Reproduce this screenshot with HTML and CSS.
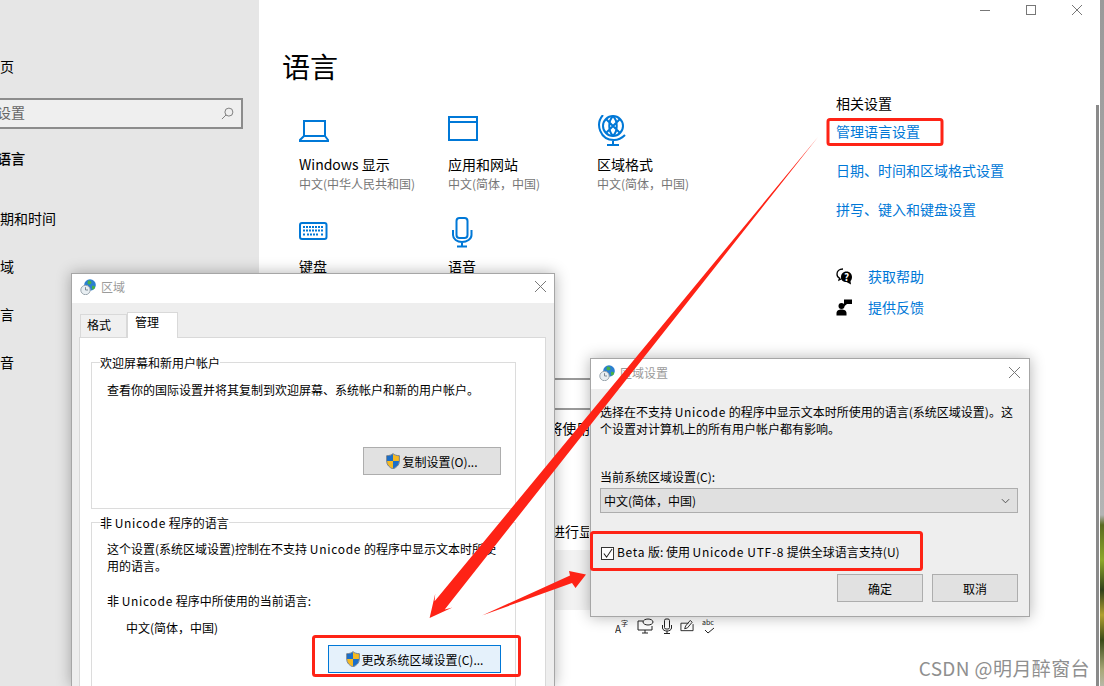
FILE: index.html
```html
<!DOCTYPE html>
<html lang="zh-CN">
<head>
  <meta charset="UTF-8" />
  <title>语言</title>
  <link rel="stylesheet" href="styles.css">
</head>
<body>
  <svg class="icon-defs" xmlns="http://www.w3.org/2000/svg">
    <symbol id="shield" viewBox="0 0 14 16">
      <path fill="#1c6fc9" d="M7 1 L7 8 L1 8 L1 3 C3.5 3 5.5 2.2 7 1z"/>
      <path fill="#f6b921" d="M7 1 C8.5 2.2 10.5 3 13 3 L13 8 L7 8z"/>
      <path fill="#f6b921" d="M1 8 L7 8 L7 15.5 C3.5 14 1.2 12 1 8z"/>
      <path fill="#1c6fc9" d="M7 8 L13 8 C12.8 12 10.5 14 7 15.5z"/>
      <path fill="none" stroke="#4a5a6a" stroke-width="0.7" d="M7 .6 C5.5 2 3.2 2.7 .6 2.7 L.6 8 C.8 12.3 3.4 14.4 7 16 C10.6 14.4 13.2 12.3 13.4 8 L13.4 2.7 C10.8 2.7 8.500 2 7 .6z"/>
    </symbol>
    <symbol id="globe-clock" viewBox="0 0 16 16">
      <circle cx="10" cy="6" r="5.800" fill="#2b7fd0"/>
      <path fill="#46b04a" d="M8 1.500 C10 1 12 2.500 11.500 4 C10.500 6 8.500 5.500 7.500 4.500z M12 7 C14 6.500 15.500 7 15 9 C14 10.500 12.500 11 12 10z"/>
      <circle cx="5.500" cy="11" r="4.700" fill="#e8eef2" stroke="#9aa5ad" stroke-width="1"/>
      <path fill="none" stroke="#7d8a93" stroke-width="1" d="M5.500 8.200 V11 H8"/>
    </symbol>
  </svg>

  <div class="settings">
    <nav class="sidebar">
      <div class="side-item home">主页</div>
      <div class="search"><span class="search-text">查找设置</span>
        <svg class="search-icon" viewBox="0 0 14 14"><circle cx="8.500" cy="5.500" r="4.300"/><path d="M5.500 8.500 L1 13"/></svg>
      </div>
      <div class="side-item selected">语言</div>
      <div class="side-item first">日期和时间</div>
      <div class="side-item">区域</div>
      <div class="side-item">语言</div>
      <div class="side-item">语音</div>
    </nav>

    <main class="content">
      <div class="content-main">
        <h1>语言</h1>
        <div class="tiles">
          <div class="tile">
            <svg class="tile-icon" viewBox="0 0 40 40"><rect x="5" y="6" width="21" height="15"/><path d="M5 21 L1 25 V26 H29 V25 L26 21"/></svg>
            <div class="tile-title">Windows 显示</div>
            <div class="tile-sub">中文(中华人民共和国)</div>
          </div>
          <div class="tile">
            <svg class="tile-icon" viewBox="0 0 40 40"><rect x="1" y="2" width="28" height="23"/><path d="M1 7 H29"/></svg>
            <div class="tile-title">应用和网站</div>
            <div class="tile-sub">中文(简体，中国)</div>
          </div>
          <div class="tile">
            <svg class="tile-icon" viewBox="0 0 40 40"><circle cx="16" cy="11" r="10"/><path d="M9 4 L23 18 M23 4 L9 18 M16 1 C11 6 11 16 16 21 M16 1 C21 6 21 16 16 21"/><path d="M6 0 C-2 9 3 25 17 25 C21 25 24 24 28 20 M16 25 V30 M10 30 H22"/></svg>
            <div class="tile-title">区域格式</div>
            <div class="tile-sub">中文(简体，中国)</div>
          </div>
          <div class="tile">
            <svg class="tile-icon" viewBox="0 0 40 40"><rect x="1" y="6" width="26.500" height="16" rx="2"/><path class="keys" d="M4 10 H24 M4 13.500 H24 M8 17.500 H20 M4 17.500 H6 M22 17.500 H24"/></svg>
            <div class="tile-title">键盘</div>
          </div>
          <div class="tile">
            <svg class="tile-icon" viewBox="0 0 40 40"><rect x="8.500" y="1" width="11" height="20" rx="3"/><path d="M5 13 V18 C5 22 9 25 14 25 C19 25 23.500 22 23.500 18 V13 M14 25 V29 M9 29.500 H19"/></svg>
            <div class="tile-title">语音</div>
          </div>
        </div>

        <section class="lang-section">
          <h2>Windows 显示语言</h2>
          <div class="lang-box"></div>
          <p class="lang-note first-note">Windows 功能(如“设置”和文件管理器)将使用此语言显示。</p>
          <h2 class="second">首选语言</h2>
          <p class="lang-note">应用和网站将以列表中支持的第一种语言进行显示。</p>
          <div class="lang-row"></div>
          <div class="lang-icons">
            <svg viewBox="0 0 14 16" class="lang-icon"><text x="0" y="15" class="glyph">A</text><text x="6" y="8" class="glyph small">字</text></svg>
            <svg viewBox="0 0 17 16" class="lang-icon wide"><path d="M6 3 H1 V12 H15 V8 M8 12 V15 M5 15 H11"/><ellipse cx="11" cy="4" rx="5" ry="3"/></svg>
            <svg viewBox="0 0 10 16" class="lang-icon narrow"><rect x="2.500" y="1" width="5" height="10" rx="1.500"/><path d="M.5 7 V10 C.5 12 3 13 5 13 C7 13 9.500 12 9.500 10 V7 M5 13 V15 M2 15.500 H8"/></svg>
            <svg viewBox="0 0 15 16" class="lang-icon"><path d="M1 5 H9 M14 6 V13 H1 V5"/><path d="M5 11 L6 8 L11 2 L13 4 L8 10z"/></svg>
            <svg viewBox="0 0 14 16" class="lang-icon"><text x="0" y="7" class="glyph small">abc</text><path d="M3 12 L6 15 L12 10"/></svg>
          </div>
        </section>
      </div>

      <aside class="related">
        <div class="related-title">相关设置</div>
        <a class="link first">管理语言设置</a>
        <a class="link">日期、时间和区域格式设置</a>
        <a class="link">拼写、键入和键盘设置</a>
        <div class="help-row help-first">
          <svg class="help-icon" viewBox="0 0 17 17"><path class="hollow" d="M7 1 C3 1 1 3 1 6 C1 8 2 9.500 3.500 10 L3 12 L6 10.500"/><path class="solid" d="M10.500 3.500 C7 3.500 5 6 5 9 C5 12 7 14 10.500 14 L15 16.500 L14.500 13 C15.500 12 16 10.500 16 9 C16 6 14 3.500 10.500 3.500z"/><text x="8" y="12.500" class="help-q">?</text></svg>
          <a class="link plain">获取帮助</a>
        </div>
        <div class="help-row">
          <svg class="help-icon" viewBox="0 0 17 17"><path class="solid" d="M8 0.500 H16 V5 H11 L8 7.500z"/><circle class="solid" cx="5.500" cy="7" r="3"/><path class="solid" d="M0.500 16.500 V14 C0.500 11.500 3 10.500 5.500 10.500 C8 10.500 10.500 11.500 10.500 14 V16.500z"/></svg>
          <a class="link plain">提供反馈</a>
        </div>
      </aside>
    </main>

    <div class="caption-btns">
      <svg viewBox="0 0 10 10" class="cap-btn"><path d="M0 5.500 H10"/></svg>
      <svg viewBox="0 0 10 10" class="cap-btn"><rect x=".5" y=".5" width="9" height="9"/></svg>
      <svg viewBox="0 0 10 10" class="cap-btn"><path d="M0 0 L10 10 M10 0 L0 10"/></svg>
    </div>
    <div class="scroll-thumb"></div>
  </div>
  <div class="desktop-strip"></div>

  <!-- 区域 dialog -->
  <div class="dialog region">
    <div class="dialog-title">
      <svg class="title-icon"><use href="#globe-clock"/></svg>
      <span class="title-text">区域</span>
      <svg viewBox="0 0 10 10" class="dialog-close"><path d="M0 0 L10 10 M10 0 L0 10"/></svg>
    </div>
    <div class="dialog-body">
      <div class="tabs">
        <div class="tab">格式</div>
        <div class="tab active">管理</div>
      </div>
      <div class="tab-panel">
        <fieldset class="group group-welcome">
          <legend>欢迎屏幕和新用户帐户</legend>
          <p>查看你的国际设置并将其复制到欢迎屏幕、系统帐户和新的用户帐户。</p>
          <div class="group-actions">
            <button class="btn copy-btn"><svg class="shield"><use href="#shield"/></svg>复制设置(O)...</button>
          </div>
        </fieldset>
        <fieldset class="group group-unicode">
          <legend>非 <span class="latin">Unicode</span> 程序的语言</legend>
          <p>这个设置(系统区域设置)控制在不支持 <span class="latin">Unicode</span> 的程序中显示文本时所使用的语言。</p>
          <p class="current-label">非 <span class="latin">Unicode</span> 程序中所使用的当前语言:</p>
          <p class="current-value">中文(简体，中国)</p>
          <div class="group-actions">
            <button class="btn focus change-btn"><svg class="shield"><use href="#shield"/></svg>更改系统区域设置(C)...</button>
          </div>
        </fieldset>
      </div>
    </div>
  </div>

  <!-- 区域设置 dialog -->
  <div class="dialog locale">
    <div class="dialog-title">
      <svg class="title-icon"><use href="#globe-clock"/></svg>
      <span class="title-text">区域设置</span>
      <svg viewBox="0 0 10 10" class="dialog-close"><path d="M0 0 L10 10 M10 0 L0 10"/></svg>
    </div>
    <div class="dialog-body locale-body">
      <p class="locale-desc">选择在不支持 <span class="latin">Unicode</span> 的程序中显示文本时所使用的语言(系统区域设置)。这<br>个设置对计算机上的所有用户帐户都有影响。</p>
      <div class="locale-label">当前系统区域设置(C):</div>
      <div class="select">
        <span>中文(简体，中国)</span>
        <svg viewBox="0 0 10 6" class="select-arrow"><path d="M1 1 L5 5 L9 1"/></svg>
      </div>
      <label class="check-row">
        <span class="checkbox"><svg viewBox="0 0 12 12"><path d="M2 6 L5 10 L11 1"/></svg></span>
        <span><span class="latin">Beta</span> 版: 使用 <span class="latin">Unicode UTF-8</span> 提供全球语言支持(U)</span>
      </label>
      <div class="locale-actions">
        <button class="btn wide">确定</button>
        <button class="btn wide">取消</button>
      </div>
    </div>
  </div>

  <!-- screenshot markup -->
  <svg class="markup" viewBox="0 0 1104 686" xmlns="http://www.w3.org/2000/svg">
    <rect x="828" y="119.500" width="114" height="25" rx="2"/>
    <rect x="313.500" y="636.500" width="206" height="39" rx="2"/>
    <rect x="591.500" y="532.500" width="330" height="37" rx="2"/>
    <polygon points="818,137 444.700,609.400 452.400,607.500 429.600,618 435.200,593.700 434.600,601.200"/>
    <polygon points="482,615.500 572,583 575.500,588 586,574.500 569,571 570,575.500"/>
  </svg>

  <div class="watermark">CSDN @明月醉窗台</div>
</body>
</html>
```

FILE: styles.css
```css
* {
  box-sizing: border-box;
}
body {
  margin: 0;
  width: 1104px;
  height: 686px;
  position: relative;
  overflow: hidden;
  background: #fff;
  color: #000;
  font-family: "Noto Sans CJK SC", "Noto Sans", sans-serif;
  font-size: 14px;
}
.icon-defs {
  position: absolute;
  width: 0;
  height: 0;
}
p {
  margin: 0;
}
.latin {
  letter-spacing: 0.7px;
}

/* settings window */
.settings {
  display: flex;
  width: 1100px;
  height: 686px;
  position: relative;
  overflow: hidden;
}
.sidebar {
  flex: 0 0 259px;
  background: #e6e6e6;
  padding-top: 42px;
  overflow: hidden;
}
.side-item {
  height: 48px;
  line-height: 48px;
  margin-left: -14px;
  white-space: nowrap;
}
.side-item.selected {
  margin-left: -3px;
  margin-top: 5px;
  -webkit-text-stroke: 0.3px #000;
}
.side-item.first {
  margin-top: 12px;
}
.search {
  margin: 8px 16px 0 -10px;
  height: 31px;
  border: 2px solid #8c8c8c;
  background: #efefef;
  display: flex;
  align-items: center;
  justify-content: space-between;
  padding: 0 7px 0 0;
  color: #666;
  overflow: hidden;
}
.search-text {
  margin: -3px 0 0 -23px;
  white-space: nowrap;
}
.search-icon {
  width: 13px;
  height: 13px;
  fill: none;
  stroke: #777;
  stroke-width: 1;
}
.content {
  flex: 1;
  display: flex;
  padding-left: 24px;
}
.content-main {
  flex: 0 0 553px;
  padding-top: 46px;
}
h1 {
  margin: 0 0 0 -1px;
  font-size: 28px;
  font-weight: 400;
  line-height: 40px;
}
.tiles {
  margin-top: 29px;
  padding-left: 16px;
  display: grid;
  grid-template-columns: repeat(3, 149px);
  grid-auto-rows: 102px;
}
.tile-icon {
  display: block;
  width: 40px;
  height: 40px;
  fill: none;
  stroke: #0078d7;
  stroke-width: 2;
}
.tile-icon .keys {
  stroke-width: 2;
  stroke-dasharray: 2 1;
}
.tile-title {
  line-height: 20px;
  margin-top: -1px;
  white-space: nowrap;
}
.tile-sub {
  margin-top: 1px;
  font-size: 12px;
  line-height: 18px;
  color: #767676;
  white-space: nowrap;
}
.lang-section {
  padding-left: 16px;
}
.lang-section h2 {
  margin: 10px 0 0;
  font-size: 20px;
  line-height: 30px;
  font-weight: 400;
}
.lang-section h2.second {
  margin-top: 40px;
  margin-bottom: 13px;
}
.lang-box {
  margin-top: 19px;
  height: 32px;
  width: 400px;
  border: 2px solid #999;
}
.lang-note {
  margin-top: 8px;
  width: 290px;
  line-height: 20px;
  white-space: nowrap;
  overflow: hidden;
}
.lang-note.first-note {
  letter-spacing: -0.2px;
}
.lang-section h2.second + .lang-note {
  margin-top: 0;
}
.lang-row {
  margin-top: 9px;
  height: 60px;
  width: 520px;
  background: #f2f2f2;
}
.lang-icons {
  margin: 8px 0 0 316px;
  display: flex;
  align-items: flex-start;
  gap: 8px;
}
.lang-icon {
  width: 14px;
  height: 16px;
  fill: none;
  stroke: #222;
  stroke-width: 1;
}
.lang-icon.wide {
  width: 17px;
}
.lang-icon.narrow {
  width: 10px;
}
.lang-icon .glyph {
  fill: #222;
  stroke: none;
  font-size: 10px;
}
.lang-icon .glyph.small {
  font-size: 7px;
}
.related {
  padding: 93px 0 0;
}
.related-title {
  line-height: 20px;
}
.link {
  display: block;
  margin-top: 19px;
  line-height: 20px;
  color: #0078d7;
  white-space: nowrap;
}
.link.first {
  margin-top: 8px;
}
.link.plain {
  margin-top: 0;
}
.help-row {
  display: flex;
  align-items: center;
  gap: 15px;
  margin-top: 11px;
}
.help-row.help-first {
  margin-top: 47px;
}
.help-icon {
  width: 17px;
  height: 17px;
}
.help-icon .solid {
  fill: #000;
}
.help-icon .hollow {
  fill: none;
  stroke: #000;
  stroke-width: 1.300;
}
.help-q {
  fill: #fff;
  font-size: 10px;
  font-weight: 700;
}
.caption-btns {
  position: absolute;
  top: 5px;
  left: 980px;
  display: flex;
  gap: 36px;
}
.cap-btn {
  width: 10px;
  height: 10px;
  fill: none;
  stroke: #777;
  stroke-width: 1;
}
.scroll-thumb {
  position: absolute;
  left: 1096px;
  top: 105px;
  bottom: 0;
  width: 3px;
  background: #8a8a8a;
}
.desktop-strip {
  position: absolute;
  left: 1100px;
  top: 0;
  width: 4px;
  height: 686px;
  background: linear-gradient(180deg, #9a9a9a 0, #b4b4b4 515px, #5a6a20 525px, #8da82a 560px, #30401a 590px, #b0a030 615px, #3a4a18 640px, #a8a878 670px, #b8b8a8 686px);
}

/* dialogs */
.dialog {
  position: absolute;
  background: #eee;
  border: 1px solid #a6a6a6;
  box-shadow: 0 0 14px rgba(0, 0, 0, 0.3);
  font-size: 12px;
}
.dialog.region {
  left: 71px;
  top: 273px;
  width: 484px;
  height: 413px;
  border-bottom: 0;
}
.dialog.locale {
  left: 590px;
  top: 358px;
  width: 440px;
  height: 259px;
}
.dialog-title {
  height: 30px;
  background: #fff;
  display: flex;
  align-items: center;
  padding: 0 8px 3px;
  gap: 5px;
}
.region .dialog-title {
  height: 29px;
  padding-bottom: 4px;
}
.locale .dialog-close {
  margin-right: 1px;
}
.title-icon {
  width: 16px;
  height: 16px;
}
.title-text {
  color: #9b9b9b;
  flex: 1;
}
.dialog-close {
  width: 11px;
  height: 11px;
  fill: none;
  stroke: #777;
  stroke-width: 0.9;
}
.dialog-body {
  padding: 8px 9px 0 7px;
}
.tabs {
  display: flex;
  align-items: flex-end;
  height: 26px;
  padding-left: 1px;
  position: relative;
  z-index: 1;
}
.tab {
  width: 47px;
  height: 23px;
  line-height: 19px;
  padding-left: 6px;
  background: #f0f0f0;
  border: 1px solid #d9d9d9;
  border-bottom: 0;
}
.tab.active {
  width: 51px;
  height: 26px;
  line-height: 18px;
  padding-left: 7px;
  background: #fff;
  margin-bottom: -1px;
}
.tab-panel {
  background: #fff;
  border: 1px solid #d9d9d9;
  border-bottom: 0;
  padding: 16px 29px 0 11px;
  width: 467px;
  height: 349px;
  overflow: hidden;
}
.group {
  margin: 0;
  padding: 10px 15px 0;
  border: 1px solid #dcdcdc;
  min-width: 0;
  line-height: 17px;
}
.group legend {
  margin-left: -7px;
  padding: 0;
  background: #fff;
  line-height: 17px;
}
.group-welcome {
  height: 155px;
}
.group-unicode {
  margin-top: 5px;
  height: 220px;
  padding-top: 9px;
}
.group-actions {
  display: flex;
  justify-content: flex-end;
}
.group-welcome .group-actions {
  margin-top: 49px;
}
.current-label {
  margin-top: 18px;
}
.current-value {
  margin-top: 10px;
  padding-left: 19px;
}
.group-unicode .group-actions {
  margin-top: 9px;
}
.btn {
  display: inline-flex;
  align-items: center;
  justify-content: center;
  height: 28px;
  padding: 0;
  background: #e1e1e1;
  border: 1px solid #adadad;
  font: inherit;
  color: #000;
}
.btn.focus {
  background: #e5f1fb;
  border-color: #0078d7;
}
.copy-btn {
  width: 138px;
  margin-right: -1px;
}
.change-btn {
  width: 173px;
  margin-right: -1px;
}
.shield {
  width: 14px;
  height: 16px;
  margin-right: 2px;
}
.locale-body {
  padding: 14px 11px 0 9px;
}
.locale-desc {
  line-height: 17px;
  white-space: nowrap;
}
.locale-label {
  margin-top: 31px;
  line-height: 17px;
}
.select {
  margin-top: 3px;
  height: 25px;
  background: #e0e0e0;
  border: 1px solid #adadad;
  display: flex;
  align-items: center;
  justify-content: space-between;
  padding: 0 7px 0 3px;
}
.select-arrow {
  width: 9px;
  height: 6px;
  fill: none;
  stroke: #444;
  stroke-width: 1;
}
.check-row {
  margin: 30px 0 0 1px;
  display: flex;
  align-items: center;
  gap: 3px;
  line-height: 17px;
  white-space: nowrap;
}
.checkbox {
  width: 13px;
  height: 13px;
  margin-top: 3px;
  background: #fff;
  border: 1px solid #333;
  display: block;
}
.checkbox svg {
  display: block;
  width: 11px;
  height: 11px;
  fill: none;
  stroke: #222;
  stroke-width: 1.100;
}
.locale-actions {
  margin-top: 14px;
  display: flex;
  justify-content: flex-end;
  gap: 9px;
}
.btn.wide {
  width: 86px;
}

/* red annotations */
.markup {
  position: absolute;
  left: 0;
  top: 0;
  width: 1104px;
  height: 686px;
  pointer-events: none;
}
.markup rect {
  fill: none;
  stroke: #fe2316;
  stroke-width: 3;
}
.markup polygon {
  fill: #fe2316;
}
.watermark {
  position: absolute;
  right: 14px;
  top: 655px;
  font-size: 19px;
  letter-spacing: 0.4px;
  line-height: 26px;
  color: #8f8f8f;
  white-space: nowrap;
}
```
